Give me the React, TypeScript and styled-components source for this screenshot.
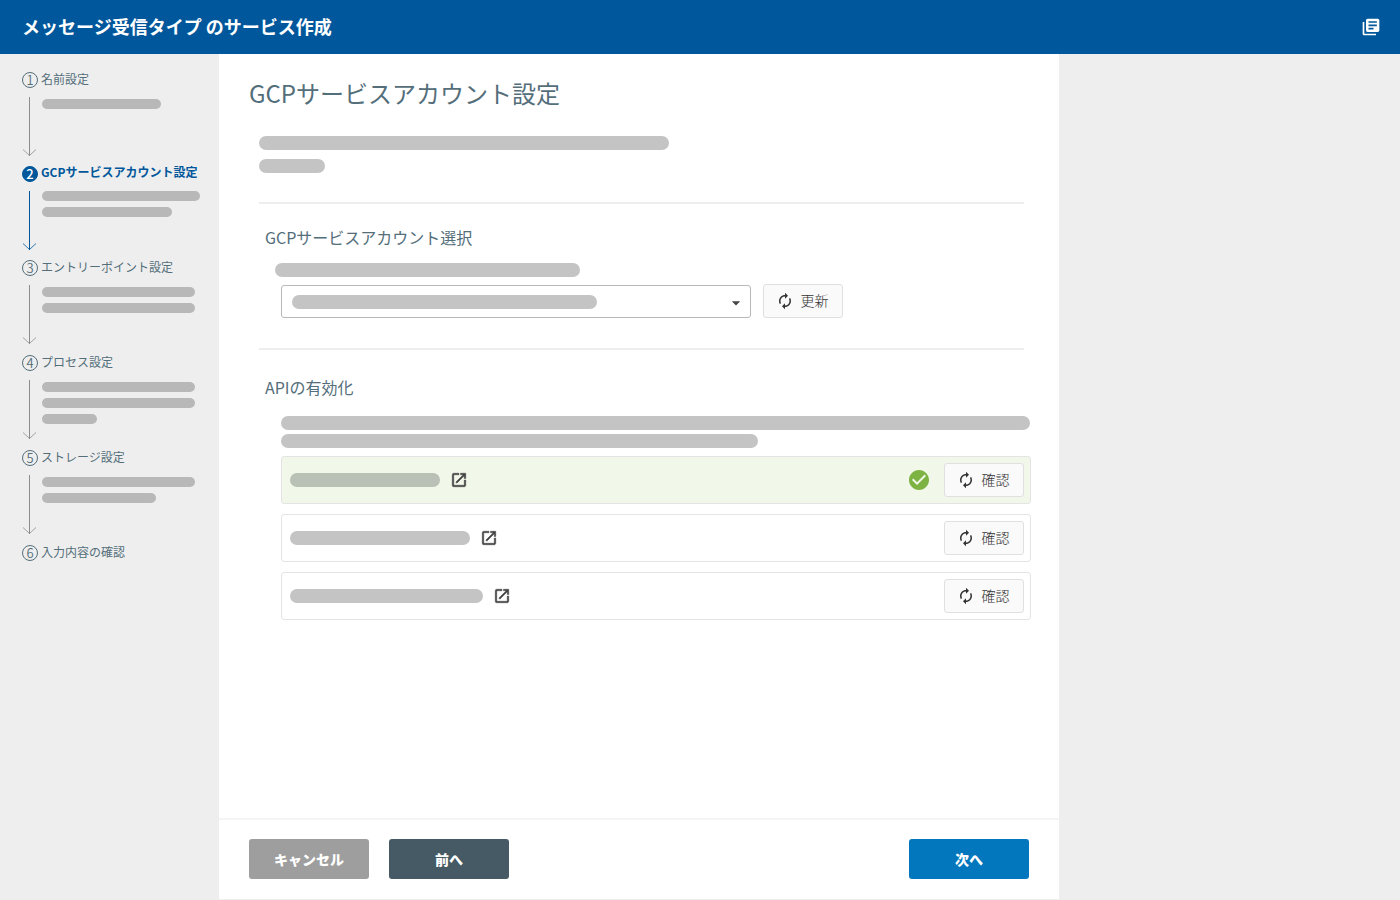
import React from 'react';
import styled, { createGlobalStyle } from 'styled-components';
import {
  MdArrowDropDown,
  MdAutorenew,
  MdCheckCircle,
  MdLibraryBooks,
  MdOpenInNew,
} from 'react-icons/md';

const GlobalStyle = createGlobalStyle`
  *, *::before, *::after { box-sizing: border-box; }
  body {
    margin: 0;
    background: #eeeeee;
    color: #546e7a;
    font-family: "Noto Sans CJK JP", "Noto Sans", sans-serif;
  }
  button, select { font-family: inherit; }
`;

const Page = styled.div`
  display: flex;
  flex-direction: column;
  min-height: 100vh;
`;

const Header = styled.header`
  display: flex;
  align-items: center;
  justify-content: space-between;
  height: 54px;
  padding: 0 19px 0 22px;
  background: #01579b;
  color: #ffffff;
`;

const HeaderTitle = styled.div`
  padding-bottom: 2px;
  font-size: 18px;
  line-height: 28px;
  font-weight: 700;
`;

const IconButton = styled.button`
  display: flex;
  padding: 0;
  border: 0;
  background: none;
  color: inherit;
  cursor: pointer;
`;

const Body = styled.div`
  flex: 1;
  display: flex;
  align-items: stretch;
`;

const Sidebar = styled.nav`
  flex: 0 0 219px;
  padding: 16px 0 0 22px;
`;

const StepList = styled.ol`
  list-style: none;
  margin: 0;
  padding: 0;
`;

const StepItem = styled.li<{ $height: number; $active?: boolean }>`
  min-height: ${(p) => p.$height}px;
  color: ${(p) => (p.$active ? '#01579b' : '#546e7a')};
`;

const StepHead = styled.div<{ $active?: boolean }>`
  display: flex;
  align-items: flex-end;
  gap: 3px;
  height: 18px;
  font-size: 12px;
  line-height: 18px;
  font-weight: ${(p) => (p.$active ? 700 : 400)};
`;

const StepNumber = styled.span<{ $active?: boolean }>`
  display: flex;
  align-items: center;
  justify-content: center;
  flex: none;
  width: 16px;
  height: 16px;
  border: 1px solid currentColor;
  border-radius: 50%;
  font-size: 13px;
  line-height: 12px;
  background: ${(p) => (p.$active ? '#01579b' : 'transparent')};

  span {
    padding-bottom: 1px;
    color: ${(p) => (p.$active ? '#ffffff' : 'inherit')};
    font-weight: ${(p) => (p.$active ? 500 : 350)};
  }
`;

const StepLabel = styled.span<{ $active?: boolean }>`
  padding-bottom: ${(p) => (p.$active ? 1 : 0)}px;
  white-space: nowrap;
`;

const StepBody = styled.div`
  display: flex;
  gap: 8px;
  padding: 9px 0 0 2px;
`;

const StepLines = styled.div<{ $active?: boolean }>`
  display: flex;
  flex-direction: column;
  gap: 6px;
  padding-top: ${(p) => (p.$active ? 0 : 2)}px;
`;

const StepBar = styled.span<{ $width: number }>`
  width: ${(p) => p.$width}px;
  height: 10px;
  border-radius: 5px;
  background: #b8b8b8;
`;

const Main = styled.main`
  flex: 0 1 840px;
  display: flex;
  flex-direction: column;
  margin-bottom: 1px;
  background: #ffffff;
`;

const Content = styled.div`
  flex: 1;
  padding: 21px 28px 40px 30px;
`;

const PageTitle = styled.h1`
  margin: 0 0 25px;
  font-size: 24px;
  line-height: 36px;
  font-weight: 400;
`;

const Intro = styled.div`
  display: flex;
  flex-direction: column;
  gap: 9px;
  padding-left: 10px;
`;

const Bar = styled.span<{ $width: number; $tinted?: boolean }>`
  display: block;
  width: ${(p) => p.$width}px;
  max-width: 100%;
  height: 14px;
  border-radius: 7px;
  background: ${(p) => (p.$tinted ? '#b9c0b5' : '#c4c4c4')};
`;

const Divider = styled.hr`
  height: 2px;
  margin: 29px 7px 21px 10px;
  border: 0;
  background: #eeeeee;
`;

const Section = styled.section<{ $spaced?: boolean }>`
  padding: ${(p) => (p.$spaced ? 4 : 0)}px 0 1px 16px;
`;

const SectionTitle = styled.h2`
  margin: 0;
  font-size: 16px;
  line-height: 24px;
  font-weight: 400;
`;

const FieldLabel = styled.label`
  display: block;
  padding: 14px 0 7px 10px;
`;

const FieldRow = styled.div`
  display: flex;
  align-items: flex-end;
  gap: 12px;
  padding-left: 16px;
`;

const SelectBox = styled.div`
  position: relative;
  flex: 0 1 470px;
  display: flex;
  color: #444444;

  svg {
    position: absolute;
    right: 5px;
    top: 8px;
    pointer-events: none;
  }
`;

const Select = styled.select`
  width: 100%;
  height: 33px;
  border: 1px solid #b8b8b8;
  border-radius: 3px;
  background: #ffffff;
  appearance: none;
`;

const SelectValue = styled.div`
  position: absolute;
  left: 11px;
  top: 10px;
  pointer-events: none;
`;

const SmallButton = styled.button`
  display: flex;
  align-items: center;
  justify-content: center;
  gap: 7px;
  flex: none;
  width: 80px;
  height: 34px;
  padding: 0 2px 0 0;
  border: 1px solid #e0e0e0;
  border-radius: 3px;
  background: #fafafa;
  color: #333333;
  font-size: 14px;
  line-height: 20px;
  font-weight: 300;
  cursor: pointer;

  span {
    padding-bottom: 2px;
  }
`;

const Description = styled.div`
  display: flex;
  flex-direction: column;
  gap: 4px;
  padding: 17px 1px 8px 16px;
`;

const ApiList = styled.ul`
  display: flex;
  flex-direction: column;
  gap: 10px;
  margin: 0;
  padding: 0 0 0 16px;
  list-style: none;
`;

const ApiRow = styled.li<{ $done?: boolean }>`
  display: flex;
  align-items: center;
  height: 48px;
  padding: 0 6px 0 8px;
  border: 1px solid #e4e4e4;
  border-radius: 3px;
  background: ${(p) => (p.$done ? '#f1f7e9' : '#ffffff')};
`;

const ApiLink = styled.a`
  display: flex;
  align-items: center;
  gap: 10px;
  color: #424242;

  path:not([fill='none']) {
    stroke: currentColor;
    stroke-width: 0.6px;
  }
`;

const ApiActions = styled.div`
  display: flex;
  align-items: center;
  gap: 13px;
  margin-left: auto;
  color: #7cb342;
`;

const Footer = styled.footer`
  display: flex;
  gap: 20px;
  height: 81px;
  padding: 19px 30px 0;
  border-top: 2px solid #f5f5f5;
`;

const actionColors = {
  cancel: '#9e9e9e',
  back: '#455a64',
  next: '#0277bd',
};

const ActionButton = styled.button<{ $kind: keyof typeof actionColors }>`
  width: 120px;
  height: 40px;
  margin-left: ${(p) => (p.$kind === 'next' ? 'auto' : '0')};
  padding: 0 0 1px;
  border: 0;
  border-radius: 3px;
  background: ${(p) => actionColors[p.$kind]};
  color: #ffffff;
  font-size: 14px;
  line-height: 20px;
  font-weight: 900;
  cursor: pointer;
`;

const steps = [
  { label: '名前設定', bars: [119], height: 94 },
  { label: 'GCPサービスアカウント設定', bars: [158, 130], height: 94, active: true },
  { label: 'エントリーポイント設定', bars: [153, 153], height: 95 },
  { label: 'プロセス設定', bars: [153, 153, 55], height: 95 },
  { label: 'ストレージ設定', bars: [153, 114], height: 95 },
  { label: '入力内容の確認', bars: [], height: 18 },
];

const apis = [
  { width: 150, done: true },
  { width: 180, done: false },
  { width: 193, done: false },
];

function StepArrow({ active }: { active?: boolean }) {
  return (
    <svg width="10" height="60" viewBox="0 0 10 60" overflow="visible" aria-hidden="true">
      <g stroke={active ? '#01579b' : '#8c8c8c'} fill="none">
        <path d="M5.5 0V59" strokeWidth="1" />
        <path d="M-1 52.5L5.5 58.5L12 52.5" strokeWidth="0.8" />
      </g>
    </svg>
  );
}

export default function App() {
  return (
    <Page>
      <GlobalStyle />
      <Header>
        <HeaderTitle>メッセージ受信タイプ のサービス作成</HeaderTitle>
        <IconButton type="button" aria-label="ドキュメント">
          <MdLibraryBooks size={20} />
        </IconButton>
      </Header>
      <Body>
        <Sidebar>
          <StepList>
            {steps.map((step, i) => (
              <StepItem key={step.label} $height={step.height} $active={step.active}>
                <StepHead $active={step.active}>
                  <StepNumber $active={step.active}>
                    <span>{i + 1}</span>
                  </StepNumber>
                  <StepLabel $active={step.active}>{step.label}</StepLabel>
                </StepHead>
                {step.bars.length > 0 && (
                  <StepBody>
                    <StepArrow active={step.active} />
                    <StepLines $active={step.active}>
                      {step.bars.map((w, n) => (
                        <StepBar key={n} $width={w} />
                      ))}
                    </StepLines>
                  </StepBody>
                )}
              </StepItem>
            ))}
          </StepList>
        </Sidebar>
        <Main>
          <Content>
            <PageTitle>GCPサービスアカウント設定</PageTitle>
            <Intro>
              <Bar $width={410} />
              <Bar $width={66} />
            </Intro>
            <Divider />
            <Section>
              <SectionTitle>GCPサービスアカウント選択</SectionTitle>
              <FieldLabel htmlFor="account">
                <Bar $width={305} />
              </FieldLabel>
              <FieldRow>
                <SelectBox>
                  <Select id="account" aria-label="GCPサービスアカウント" />
                  <SelectValue>
                    <Bar $width={305} />
                  </SelectValue>
                  <MdArrowDropDown size={20} />
                </SelectBox>
                <SmallButton type="button">
                  <MdAutorenew size={18} />
                  <span>更新</span>
                </SmallButton>
              </FieldRow>
            </Section>
            <Divider />
            <Section $spaced>
              <SectionTitle>APIの有効化</SectionTitle>
              <Description>
                <Bar $width={749} />
                <Bar $width={477} />
              </Description>
              <ApiList>
                {apis.map((api) => (
                  <ApiRow key={api.width} $done={api.done}>
                    <ApiLink href="#" aria-label="APIを開く">
                      <Bar $width={api.width} $tinted={api.done} />
                      <MdOpenInNew size={18} />
                    </ApiLink>
                    <ApiActions>
                      {api.done && <MdCheckCircle size={24} />}
                      <SmallButton type="button">
                        <MdAutorenew size={18} />
                        <span>確認</span>
                      </SmallButton>
                    </ApiActions>
                  </ApiRow>
                ))}
              </ApiList>
            </Section>
          </Content>
          <Footer>
            <ActionButton type="button" $kind="cancel">キャンセル</ActionButton>
            <ActionButton type="button" $kind="back">前へ</ActionButton>
            <ActionButton type="button" $kind="next">次へ</ActionButton>
          </Footer>
        </Main>
      </Body>
    </Page>
  );
}
